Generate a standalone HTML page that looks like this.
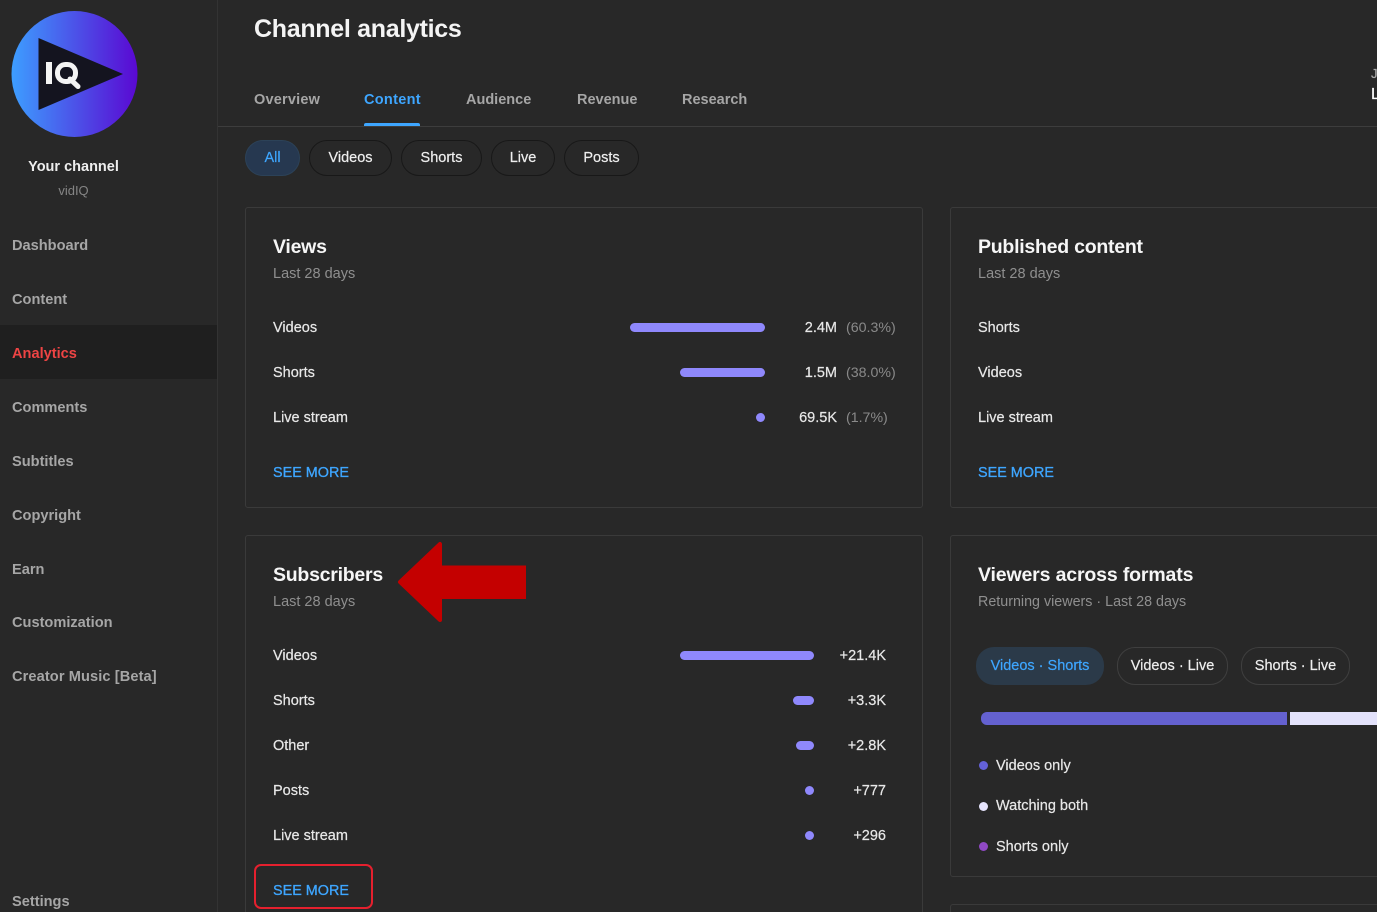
<!DOCTYPE html>
<html><head><meta charset="utf-8"><title>Channel analytics</title>
<style>
html,body{margin:0;padding:0;width:1377px;height:912px;overflow:hidden;background:#282828;font-family:"Liberation Sans",sans-serif;}
#p{position:relative;width:1377px;height:912px;overflow:hidden;background:#282828;}
#p div,#p span.t{position:absolute;white-space:nowrap;}
.t{line-height:20px;height:20px;font-size:14.5px;color:#e8e8e8;-webkit-text-stroke:.2px currentColor;}
.nav{left:12px;font-size:14.6px;color:#a6a6a6;font-weight:bold;-webkit-text-stroke:0;}
.tab{top:90px;font-size:14.5px;color:#a6a6a6;font-weight:bold;-webkit-text-stroke:0;}
.chip{top:140px;height:34px;border:1px solid #181818;border-radius:18px;line-height:34px;text-align:center;font-size:14.5px;color:#eee;-webkit-text-stroke:.2px currentColor;}
.card{border:1px solid #3a3a3a;border-radius:3px;box-sizing:border-box;}
.h{font-size:19.5px;font-weight:bold;color:#f6f6f6;letter-spacing:-.25px;-webkit-text-stroke:0;}
.s{font-size:14.5px;color:#8f8f8f;-webkit-text-stroke:0;}
.r{text-align:right;}
.m{color:#8a8a8a;font-size:14.2px;-webkit-text-stroke:0;}
.bar{height:9px;background:#8f88fc;border-radius:5px;}
.more{font-size:14.4px;color:#3ea6ff;-webkit-text-stroke:.3px #3ea6ff;}
.dot{width:9px;height:9px;border-radius:50%;}
</style></head><body><div id="p">

<div style="left:217px;top:0;width:1px;height:912px;background:#333"></div>
<div style="left:0;top:325px;width:217px;height:54px;background:#1f1f1f"></div>

<svg style="position:absolute;left:0;top:0" width="150" height="150" viewBox="0 0 150 150">
<defs><linearGradient id="g" x1="0" x2="1" y1="0" y2="0"><stop offset="0" stop-color="#3d9eff"/><stop offset="1" stop-color="#5a08d2"/></linearGradient></defs>
<circle cx="74.500" cy="74" r="63" fill="url(#g)"/>
<path d="M38.500 38L123 74 38.500 110Z" fill="#14141f"/>
<rect x="46" y="62" width="6" height="22" fill="#f4f4f4"/>
<rect x="57.500" y="64.500" width="18" height="17" rx="8" fill="none" stroke="#f4f4f4" stroke-width="5"/>
<path d="M70 79L78 86.500" stroke="#f4f4f4" stroke-width="5" stroke-linecap="round"/>
</svg>

<span class="t" style="left:0;width:147px;text-align:center;top:157px;font-size:14.500px;font-weight:bold;color:#eee;-webkit-text-stroke:0">Your channel</span>
<span class="t" style="left:0;width:147px;text-align:center;top:181px;font-size:13px;color:#858585;-webkit-text-stroke:0">vidIQ</span>

<span class="t nav" style="top:236px">Dashboard</span>
<span class="t nav" style="top:290px">Content</span>
<span class="t nav" style="top:344px;color:#ee4444">Analytics</span>
<span class="t nav" style="top:398px">Comments</span>
<span class="t nav" style="top:452px">Subtitles</span>
<span class="t nav" style="top:506px">Copyright</span>
<span class="t nav" style="top:560px">Earn</span>
<span class="t nav" style="top:613px">Customization</span>
<span class="t nav" style="top:667px;letter-spacing:.1px">Creator Music [Beta]</span>
<span class="t nav" style="top:892px">Settings</span>

<span class="t" style="left:254px;top:19px;font-size:25px;letter-spacing:-.3px;font-weight:bold;color:#f4f4f4;-webkit-text-stroke:0">Channel analytics</span>

<span class="t tab" style="left:254px;letter-spacing:.2px">Overview</span>
<span class="t tab" style="left:364px;color:#3ea6ff;letter-spacing:.3px">Content</span>
<span class="t tab" style="left:466px">Audience</span>
<span class="t tab" style="left:577px">Revenue</span>
<span class="t tab" style="left:682px">Research</span>
<div style="left:364px;top:123px;width:56px;height:3px;background:#3ea6ff;border-radius:2px 2px 0 0"></div>
<div style="left:218px;top:126px;width:1159px;height:1px;background:#3d3d3d"></div>
<span class="t" style="left:1371px;top:64px;font-size:13px;color:#aaa">J</span>
<span class="t" style="left:1371px;top:85px;font-size:16px;color:#fff">L</span>

<div class="chip" style="left:245px;width:53px;background:#263850;border-color:#2c4258;color:#3ea6ff">All</div>
<div class="chip" style="left:309px;width:81px">Videos</div>
<div class="chip" style="left:401px;width:79px">Shorts</div>
<div class="chip" style="left:491px;width:62px">Live</div>
<div class="chip" style="left:564px;width:73px">Posts</div>

<div class="card" style="left:245px;top:207px;width:678px;height:301px"></div>
<span class="t h" style="left:273px;top:237px">Views</span>
<span class="t s" style="left:273px;top:264px">Last 28 days</span>
<span class="t" style="left:273px;top:318px">Videos</span>
<div class="bar" style="left:630px;top:323px;width:135px"></div>
<span class="t r" style="left:737px;width:100px;top:318px">2.4M</span>
<span class="t m" style="left:846px;top:318px">(60.3%)</span>
<span class="t" style="left:273px;top:363px">Shorts</span>
<div class="bar" style="left:680px;top:368px;width:85px"></div>
<span class="t r" style="left:737px;width:100px;top:363px">1.5M</span>
<span class="t m" style="left:846px;top:363px">(38.0%)</span>
<span class="t" style="left:273px;top:408px">Live stream</span>
<div class="bar" style="left:756px;top:413px;width:9px"></div>
<span class="t r" style="left:737px;width:100px;top:408px">69.5K</span>
<span class="t m" style="left:846px;top:408px">(1.7%)</span>
<span class="t more" style="left:273px;top:463px">SEE MORE</span>

<div class="card" style="left:950px;top:207px;width:500px;height:301px"></div>
<span class="t h" style="left:978px;top:237px">Published content</span>
<span class="t s" style="left:978px;top:264px">Last 28 days</span>
<span class="t" style="left:978px;top:318px">Shorts</span>
<span class="t" style="left:978px;top:363px">Videos</span>
<span class="t" style="left:978px;top:408px">Live stream</span>
<span class="t more" style="left:978px;top:463px">SEE MORE</span>

<div class="card" style="left:245px;top:535px;width:678px;height:420px"></div>
<span class="t h" style="left:273px;top:565px">Subscribers</span>
<span class="t s" style="left:273px;top:592px">Last 28 days</span>
<span class="t" style="left:273px;top:646px">Videos</span>
<div class="bar" style="left:680px;top:651px;width:134px"></div>
<span class="t r" style="left:786px;width:100px;top:646px">+21.4K</span>
<span class="t" style="left:273px;top:691px">Shorts</span>
<div class="bar" style="left:793px;top:696px;width:21px"></div>
<span class="t r" style="left:786px;width:100px;top:691px">+3.3K</span>
<span class="t" style="left:273px;top:736px">Other</span>
<div class="bar" style="left:796px;top:741px;width:18px"></div>
<span class="t r" style="left:786px;width:100px;top:736px">+2.8K</span>
<span class="t" style="left:273px;top:781px">Posts</span>
<div class="bar" style="left:805px;top:786px;width:9px"></div>
<span class="t r" style="left:786px;width:100px;top:781px">+777</span>
<span class="t" style="left:273px;top:826px">Live stream</span>
<div class="bar" style="left:805px;top:831px;width:9px"></div>
<span class="t r" style="left:786px;width:100px;top:826px">+296</span>
<span class="t more" style="left:273px;top:881px">SEE MORE</span>
<div style="left:254px;top:864px;width:115px;height:41px;border:2px solid #e5202e;border-radius:7px"></div>

<svg style="position:absolute;left:390px;top:535px" width="140" height="95" viewBox="0 0 140 95">
<path d="M10 47L50 9V85Z" fill="#c40000" stroke="#c40000" stroke-width="4" stroke-linejoin="round"/>
<rect x="50" y="30.500" width="86" height="33.500" fill="#c40000"/>
</svg>

<div class="card" style="left:950px;top:535px;width:500px;height:342px"></div>
<span class="t h" style="left:978px;top:565px;letter-spacing:-.15px">Viewers across formats</span>
<span class="t s" style="left:978px;top:592px;font-size:14.3px">Returning viewers · Last 28 days</span>
<div class="chip" style="left:976px;top:647px;width:128px;height:38px;line-height:38px;box-sizing:border-box;background:#2b3a49;border:0;color:#3ea6ff">Videos · Shorts</div>
<div class="chip" style="left:1117px;top:647px;width:111px;height:38px;line-height:36px;box-sizing:border-box;border-color:#3f3f3f">Videos · Live</div>
<div class="chip" style="left:1241px;top:647px;width:109px;height:38px;line-height:36px;box-sizing:border-box;border-color:#3f3f3f">Shorts · Live</div>
<div style="left:981px;top:712px;width:306px;height:13px;background:#6461d0;border-radius:6px 0 0 6px"></div>
<div style="left:1290px;top:712px;width:87px;height:13px;background:#e3e2fb"></div>
<div class="dot" style="left:979px;top:761px;background:#6461d8"></div>
<span class="t" style="left:996px;top:756px">Videos only</span>
<div class="dot" style="left:979px;top:802px;background:#e6e4fd"></div>
<span class="t" style="left:996px;top:796px">Watching both</span>
<div class="dot" style="left:979px;top:842px;background:#9049c5"></div>
<span class="t" style="left:996px;top:837px">Shorts only</span>
<div class="card" style="left:950px;top:904px;width:500px;height:40px"></div>

</div></body></html>
